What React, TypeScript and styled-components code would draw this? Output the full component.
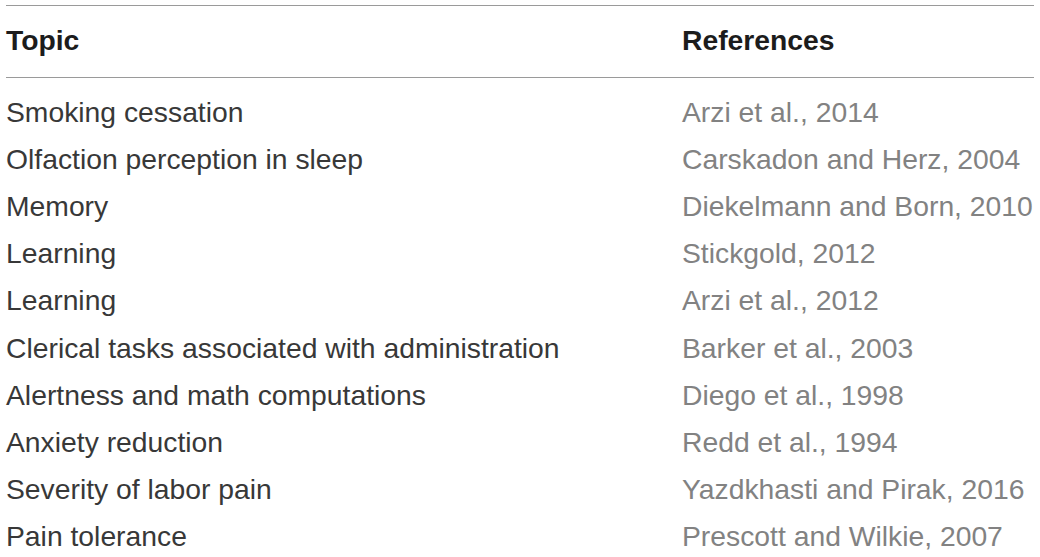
import React from "react";
import styled, { createGlobalStyle } from "styled-components";

const Global = createGlobalStyle`
  html, body { margin: 0; padding: 0; background: #ffffff; }
  body { font-family: "Liberation Sans", Arial, Helvetica, sans-serif; }
`;

const Table = styled.div`
  margin: 5px 6px 0 6px;
  width: 1028px;
  border-top: 1px solid #9a9a9a;
  display: flex;
  flex-direction: column;
`;

const Row = styled.div<{ $head?: boolean }>`
  display: grid;
  grid-template-columns: 676px 1fr;
  font-size: 28.3px;
  line-height: 47.2px;
  ${(p) =>
    p.$head
      ? `
    padding: 10.7px 0 13px 0;
    border-bottom: 1px solid #9a9a9a;
    margin-bottom: 10.7px;
    font-weight: 700;
    color: #1c1c1c;
  `
      : ""}
`;

const Cell = styled.div<{ $muted?: boolean }>`
  white-space: nowrap;
  color: ${(p) => (p.$muted ? "#828282" : "inherit")};
`;

const Body = styled.div`
  color: #383838;
`;

const rows: [string, string][] = [
  ["Smoking cessation", "Arzi et al., 2014"],
  ["Olfaction perception in sleep", "Carskadon and Herz, 2004"],
  ["Memory", "Diekelmann and Born, 2010"],
  ["Learning", "Stickgold, 2012"],
  ["Learning", "Arzi et al., 2012"],
  ["Clerical tasks associated with administration", "Barker et al., 2003"],
  ["Alertness and math computations", "Diego et al., 1998"],
  ["Anxiety reduction", "Redd et al., 1994"],
  ["Severity of labor pain", "Yazdkhasti and Pirak, 2016"],
  ["Pain tolerance", "Prescott and Wilkie, 2007"],
];

export default function App() {
  return (
    <>
      <Global />
      <Table>
        <Row $head>
          <Cell>Topic</Cell>
          <Cell>References</Cell>
        </Row>
        <Body>
          {rows.map(([t, r], i) => (
            <Row key={i}>
              <Cell>{t}</Cell>
              <Cell $muted>{r}</Cell>
            </Row>
          ))}
        </Body>
      </Table>
    </>
  );
}
